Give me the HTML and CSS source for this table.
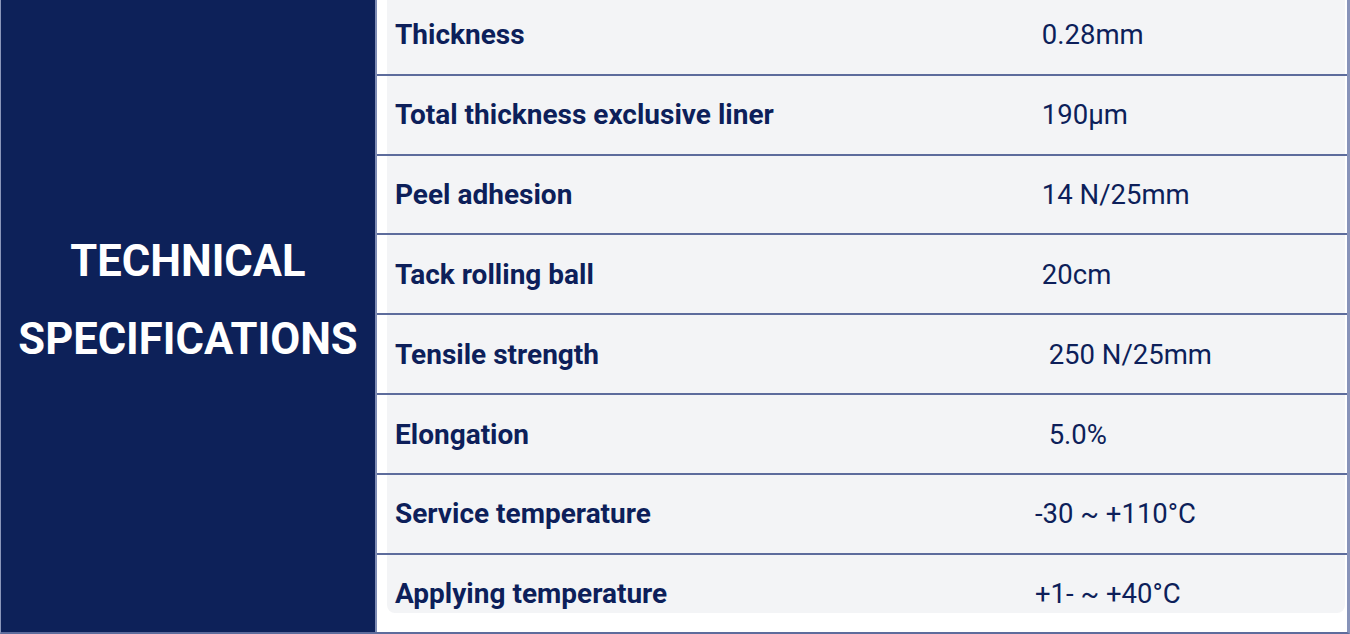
FILE: index.html
```html
<!DOCTYPE html>
<html lang="en">
<head>
<meta charset="utf-8">
<title>Technical Specifications</title>
<link rel="stylesheet" href="styles.css">
</head>
<body>
<div class="specs">
  <div class="specs-title">
    <h2>TECHNICAL<br>SPECIFICATIONS</h2>
  </div>
  <div class="specs-table">
    <div class="spec-row">
      <div class="spec-label">Thickness</div>
      <div class="spec-value">&nbsp;0.28mm</div>
    </div>
    <div class="spec-row">
      <div class="spec-label">Total thickness exclusive liner</div>
      <div class="spec-value">&nbsp;190µm</div>
    </div>
    <div class="spec-row">
      <div class="spec-label">Peel adhesion</div>
      <div class="spec-value">&nbsp;14 N/25mm</div>
    </div>
    <div class="spec-row">
      <div class="spec-label">Tack rolling ball</div>
      <div class="spec-value">&nbsp;20cm</div>
    </div>
    <div class="spec-row">
      <div class="spec-label">Tensile strength</div>
      <div class="spec-value">&nbsp;&nbsp;250 N/25mm</div>
    </div>
    <div class="spec-row">
      <div class="spec-label">Elongation</div>
      <div class="spec-value">&nbsp;&nbsp;5.0%</div>
    </div>
    <div class="spec-row">
      <div class="spec-label">Service temperature</div>
      <div class="spec-value">-30 ~ +110°C</div>
    </div>
    <div class="spec-row">
      <div class="spec-label">Applying temperature</div>
      <div class="spec-value">+1- ~ +40°C</div>
    </div>
  </div>
</div>
</body>
</html>
```

FILE: styles.css
```css
html, body {
  margin: 0;
  padding: 0;
  background: #ffffff;
}

body {
  font-family: Roboto, "Liberation Sans", Arial, sans-serif;
  color: #0d1f5a;
  overflow: hidden;
}

.specs {
  display: flex;
  width: 1346px;
  margin-top: -4px;
  border-left: 1px solid #8a96ba;
  border-right: 3px solid #8793b9;
  border-bottom: 2px solid #5d6c9c;
}

.specs-title {
  width: 374px;
  flex: none;
  background: #0d2159;
  border-right: 2px solid #7f8db4;
  display: flex;
  align-items: center;
  justify-content: center;
}

.specs-title h2 {
  margin: 0;
  padding-bottom: 26px;
  color: #ffffff;
  font-size: 43.5px;
  font-weight: 700;
  line-height: 78px;
  text-align: center;
}

.specs-table {
  flex: 1;
  position: relative;
  display: flex;
  flex-direction: column;
}

.specs-table::before {
  content: "";
  position: absolute;
  left: 10px;
  right: 2px;
  top: 0;
  bottom: 19px;
  background: #f3f4f6;
  border-radius: 0 0 8px 8px;
}

.spec-row {
  position: relative;
  display: flex;
  align-items: center;
  height: 77.83px;
  border-bottom: 2px solid #5d6c9c;
}

.spec-row:last-child {
  border-bottom: none;
  height: 77px;
}

.spec-label {
  width: 630px;
  padding-left: 18px;
  font-size: 28px;
  font-weight: 700;
}

.spec-value {
  padding-left: 10px;
  font-size: 27.5px;
  font-weight: 400;
  white-space: pre;
}
```
